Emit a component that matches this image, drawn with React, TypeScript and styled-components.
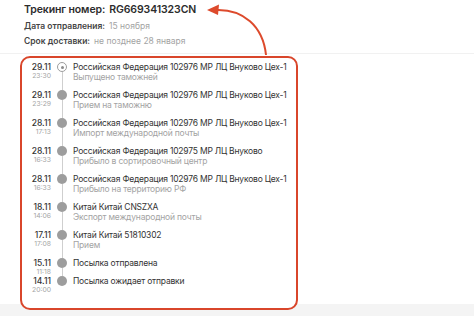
import React from 'react'
import styled, { createGlobalStyle } from 'styled-components'

const GlobalStyle = createGlobalStyle`
  html, body {
    margin: 0;
    padding: 0;
    background: #ffffff;
  }
  body {
    font-family: Inter, 'Noto Sans', sans-serif;
    -webkit-font-smoothing: antialiased;
  }
`

const Page = styled.div`
  position: relative;
  width: 474px;
  height: 316px;
  overflow: hidden;
  background: linear-gradient(to bottom, #ffffff 0, #ffffff 304px, #f4f4f4 304px);
`

const Header = styled.div`
  padding: 2px 0 0 24px;
  display: flex;
  flex-direction: column;
`

const TrackLine = styled.div`
  display: flex;
  gap: 4px;
  font-size: 10.5px;
  line-height: 16px;
  font-weight: 600;
  color: #2c2c2c;
  letter-spacing: -0.1px;
`

const MetaLine = styled.div`
  display: flex;
  gap: 4px;
  margin-top: 2px;
  font-size: 8.5px;
  line-height: 13px;
`

const MetaLabel = styled.span`
  font-weight: 600;
  color: #444;
`

const MetaValue = styled.span`
  color: #a3a3a3;
`

const Divider = styled.div`
  height: 1px;
  margin-top: 5px;
  background: #f1f1f1;
`

const Box = styled.div`
  box-sizing: border-box;
  margin: 2px 0 0 20px;
  width: 278px;
  height: 254px;
  border: 2px solid #d9462b;
  border-radius: 10px;
  background: #fff;
  padding: 4px 0 0 0;
`

const Row = styled.div`
  display: grid;
  grid-template-columns: 29px 20px 1fr;
  column-gap: 1px;
`

const DateCol = styled.div`
  display: flex;
  flex-direction: column;
  align-items: flex-end;
`

const DateText = styled.span`
  font-size: 8.5px;
  line-height: 10px;
  font-weight: 500;
  color: #333;
`

const TimeText = styled.span`
  font-size: 6.8px;
  line-height: 8px;
  color: #a5a5a5;
`

const IconCol = styled.div`
  display: flex;
  flex-direction: column;
  align-items: center;
`

const Dot = styled.div<{ current?: boolean }>`
  box-sizing: border-box;
  width: 10px;
  height: 10px;
  flex: none;
  border-radius: 50%;
  background: ${({ current }) => (current ? '#fff' : '#9d9d9d')};
  border: ${({ current }) => (current ? '1px solid #9d9d9d' : 'none')};
  display: flex;
  align-items: center;
  justify-content: center;
  &::after {
    content: '';
    display: ${({ current }) => (current ? 'block' : 'none')};
    width: 3px;
    height: 3px;
    border-radius: 50%;
    background: #8a8a8a;
  }
`

const Connector = styled.div`
  flex: 1;
  width: 1px;
  background: #cfcfcf;
`

const TextCol = styled.div<{ spaced: boolean }>`
  display: flex;
  flex-direction: column;
  padding-bottom: ${({ spaced }) => (spaced ? '8px' : '0')};
  font-size: 8.5px;
  line-height: 10px;
  letter-spacing: -0.2px;
  white-space: nowrap;
`

const Title = styled.span`
  color: #333;
`

const Subtitle = styled.span`
  color: #a3a3a3;
`

const Arrow = styled.svg`
  position: absolute;
  left: 0;
  top: 0;
  pointer-events: none;
`

const events = [
  { date: '29.11', time: '23:30', title: 'Российская Федерация 102976 МР ЛЦ Внуково Цех-1', sub: 'Выпущено таможней' },
  { date: '29.11', time: '23:29', title: 'Российская Федерация 102976 МР ЛЦ Внуково Цех-1', sub: 'Прием на таможню' },
  { date: '28.11', time: '17:13', title: 'Российская Федерация 102976 МР ЛЦ Внуково Цех-1', sub: 'Импорт международной почты' },
  { date: '28.11', time: '16:33', title: 'Российская Федерация 102975 МР ЛЦ Внуково', sub: 'Прибыло в сортировочный центр' },
  { date: '28.11', time: '16:33', title: 'Российская Федерация 102976 МР ЛЦ Внуково Цех-1', sub: 'Прибыло на территорию РФ' },
  { date: '18.11', time: '14:06', title: 'Китай Китай CNSZXA', sub: 'Экспорт международной почты' },
  { date: '17.11', time: '17:08', title: 'Китай Китай 51810302', sub: 'Прием' },
  { date: '15.11', time: '11:18', title: 'Посылка отправлена', sub: '' },
  { date: '14.11', time: '20:00', title: 'Посылка ожидает отправки', sub: '' },
]

export default function App() {
  return (
    <Page>
      <GlobalStyle />
      <Header>
        <TrackLine>
          <span>Трекинг номер:</span>
          <span>RG669341323CN</span>
        </TrackLine>
        <MetaLine>
          <MetaLabel>Дата отправления:</MetaLabel>
          <MetaValue>15 ноября</MetaValue>
        </MetaLine>
        <MetaLine>
          <MetaLabel>Срок доставки:</MetaLabel>
          <MetaValue>не позднее 28 января</MetaValue>
        </MetaLine>
      </Header>
      <Divider />
      <Box>
        {events.map((ev, i) => (
          <Row key={i}>
            <DateCol>
              <DateText>{ev.date}</DateText>
              <TimeText>{ev.time}</TimeText>
            </DateCol>
            <IconCol>
              <Dot current={i === 0} />
              {i < events.length - 1 && <Connector />}
            </IconCol>
            <TextCol spaced={!!ev.sub}>
              <Title>{ev.title}</Title>
              {ev.sub && <Subtitle>{ev.sub}</Subtitle>}
            </TextCol>
          </Row>
        ))}
      </Box>
      <Arrow width="474" height="316" viewBox="0 0 474 316">
        <path d="M216 10 C 243 9, 263 26, 266 55" fill="none" stroke="#dd4a2c" strokeWidth="2" />
        <polygon points="207,10 219,4.5 218,15" fill="#dd4a2c" />
      </Arrow>
    </Page>
  )
}
